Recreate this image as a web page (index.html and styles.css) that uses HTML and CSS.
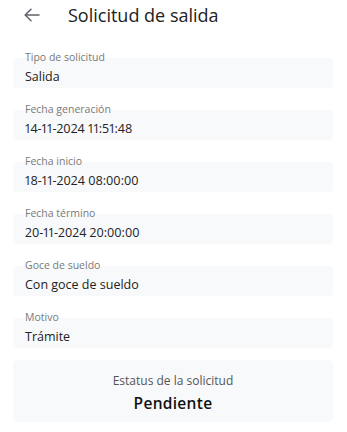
FILE: index.html
```html
<!DOCTYPE html>
<html lang="es">
<head>
    <meta charset="UTF-8">
    <meta name="viewport" content="width=device-width, initial-scale=1.0">
    <title>Solicitud de salida</title>
    <link rel="stylesheet" href="styles.css">
</head>
<body>

    <!-- Header -->
    <div class="top-bar">
        <button class="back-btn" aria-label="Volver">
            <svg width="16" height="14" viewBox="0 0 16 14" fill="none" stroke="#5f6368" stroke-width="1.5" stroke-linecap="round" stroke-linejoin="round">
                <path d="M15 7H1.5"/>
                <path d="M7 1.2L1.2 7L7 12.8"/>
            </svg>
        </button>
        <div class="top-title">Solicitud de salida</div>
    </div>

    <!-- Detail fields -->
    <div class="details">
        <div class="field">
            <div class="field-label">Tipo de solicitud</div>
            <div class="field-value">Salida</div>
        </div>
        <div class="field">
            <div class="field-label">Fecha generación</div>
            <div class="field-value">14-11-2024 11:51:48</div>
        </div>
        <div class="field">
            <div class="field-label">Fecha inicio</div>
            <div class="field-value">18-11-2024 08:00:00</div>
        </div>
        <div class="field">
            <div class="field-label">Fecha término</div>
            <div class="field-value">20-11-2024 20:00:00</div>
        </div>
        <div class="field">
            <div class="field-label">Goce de sueldo</div>
            <div class="field-value">Con goce de sueldo</div>
        </div>
        <div class="field">
            <div class="field-label">Motivo</div>
            <div class="field-value">Trámite</div>
        </div>

        <div class="status-box">
            <div class="status-label">Estatus de la solicitud</div>
            <div class="status-value">Pendiente</div>
        </div>
    </div>

</body>
</html>
```

FILE: styles.css
```css
body {
    font-family: 'Open Sans', 'Noto Sans', sans-serif;
    font-variant-numeric: proportional-nums;
    margin: 0;
    padding: 0;
    background: #ffffff;
    color: #222222;
}

.top-bar {
    display: flex;
    align-items: center;
    height: 30px;
    padding: 0 0 0 24px;
    margin-bottom: 21px;
}

.back-btn {
    background: none;
    border: none;
    padding: 0;
    width: 16px;
    height: 14px;
    display: flex;
    align-items: center;
    cursor: pointer;
}

.top-title {
    margin-left: 28px;
    font-size: 18px;
    color: #222222;
}

.details {
    padding: 0 14px 0 13px;
    display: flex;
    flex-direction: column;
    gap: 15px;
}

.field-label {
    position: relative;
    font-size: 10.5px;
    line-height: 13px;
    color: #7a7a7a;
    padding-left: 12px;
    margin-bottom: -6px;
}

.field-value {
    height: 30px;
    box-sizing: border-box;
    padding: 10px 12px 2px;
    background: #f8f9fa;
    border-radius: 4px;
    font-size: 12.5px;
    line-height: 18px;
    color: #222222;
}

.status-box {
    margin-top: -3px;
    height: 62px;
    box-sizing: border-box;
    padding-top: 13px;
    background: #f8f9fa;
    border-radius: 5px;
    text-align: center;
}

.status-label {
    font-size: 12px;
    line-height: 16px;
    color: #555555;
}

.status-value {
    margin-top: 4px;
    font-size: 15.5px;
    line-height: 20px;
    font-weight: 600;
    color: #111111;
    letter-spacing: 0.3px;
}
```
